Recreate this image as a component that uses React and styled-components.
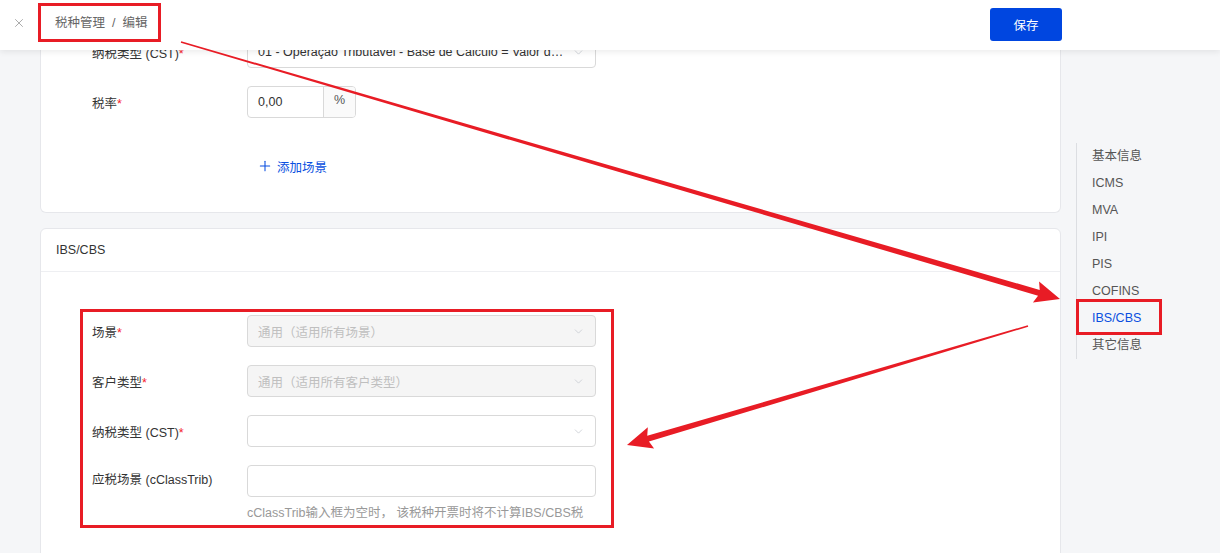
import React from 'react';
import styled, { createGlobalStyle } from 'styled-components';
import { X, Plus, ChevronDown } from 'lucide-react';

const GlobalStyle = createGlobalStyle`
  html, body {
    margin: 0;
    padding: 0;
    background: #f5f6f8;
    font-family: "Liberation Sans", "Noto Sans CJK SC", sans-serif;
    font-size: 12.5px;
    color: #333;
  }
  * { box-sizing: border-box; }
`;

const Page = styled.div`
  position: relative;
  width: 1220px;
  height: 553px;
  overflow: hidden;
  background: #f5f6f8;
`;

const TopBar = styled.div`
  position: absolute;
  top: 0;
  left: 0;
  right: 0;
  height: 50px;
  background: #fff;
  box-shadow: 0 2px 6px rgba(0, 0, 0, 0.08);
  display: flex;
  align-items: center;
  padding: 0 158px 5px 12px;
  z-index: 5;
`;

const CloseBtn = styled.span`
  display: flex;
  align-items: center;
  color: #999;
  width: 14px;
`;

const Crumbs = styled.div`
  margin-left: 29px;
  color: #666;
  display: flex;
  align-items: baseline;
  line-height: 18px;
  gap: 7px;
  flex: 1;
`;

const SaveButton = styled.button`
  width: 72px;
  height: 33px;
  border: none;
  border-radius: 3px;
  background: #0046e0;
  color: #fff;
  font-family: inherit;
  font-size: 12.5px;
  margin-top: 4px;
`;

const Body = styled.div`
  display: flex;
  padding-left: 40px;
`;

const Main = styled.div`
  width: 1021px;
  display: flex;
  flex-direction: column;
  gap: 15px;
`;

const Card = styled.section`
  background: #fff;
  border: 1px solid #e6e7eb;
  border-radius: 6px;
  ${(p) => p.$clipped && 'border-top: none; border-radius: 0 0 6px 6px;'}
`;

const CardHead = styled.div`
  height: 43px;
  padding: 0 15px;
  display: flex;
  align-items: center;
  border-bottom: 1px solid #eeeff2;
  color: #333;
`;

const CardBody = styled.div`
  padding: ${(p) => p.$pad};
  display: flex;
  flex-direction: column;
  gap: 18px;
`;

const Row = styled.div`
  display: flex;
  align-items: ${(p) => (p.$top ? 'flex-start' : 'center')};
`;

const Label = styled.div`
  width: 155px;
  flex-shrink: 0;
  color: #333;
  ${(p) => p.$top && 'line-height: 30px;'}
`;

const Star = styled.span`
  color: #f5222d;
`;

const Field = styled.div`
  display: flex;
  flex-direction: column;
`;

const Select = styled.div`
  width: 349px;
  height: 32px;
  border: 1px solid #d9d9d9;
  border-radius: 4px;
  background: ${(p) => (p.$disabled ? '#f5f5f5' : '#fff')};
  color: ${(p) => (p.$disabled ? '#bfbfbf' : '#333')};
  display: flex;
  align-items: center;
  padding: 0 10px;
  gap: 8px;
`;

const SelectText = styled.span`
  flex: 1;
  white-space: nowrap;
  overflow: hidden;
  text-overflow: ellipsis;
`;

const Chevron = styled.span`
  display: flex;
  color: #c0c4cc;
`;

const TextInput = styled.div`
  width: 349px;
  height: 32px;
  border: 1px solid #d9d9d9;
  border-radius: 4px;
  background: #fff;
`;

const Hint = styled.div`
  margin-top: 7px;
  color: #999;
  line-height: 18px;
`;

const Group = styled.div`
  display: flex;
  height: 32px;
  border: 1px solid #d9d9d9;
  border-radius: 4px;
  overflow: hidden;
`;

const GroupInput = styled.div`
  width: 75px;
  padding: 0 10px;
  display: flex;
  align-items: center;
  color: #333;
`;

const Addon = styled.div`
  width: 32px;
  border-left: 1px solid #d9d9d9;
  background: #fafafa;
  display: flex;
  justify-content: center;
  padding-top: 6px;
  color: #555;
`;

const AddLink = styled.div`
  margin: 14px 0 0 165px;
  height: 32px;
  display: flex;
  align-items: center;
  gap: 4px;
  color: #0a4fe0;
`;

const Side = styled.div`
  margin-left: 15px;
  padding-top: 143px;
`;

const Anchor = styled.ul`
  list-style: none;
  margin: 0;
  padding: 0 0 0 15px;
  border-left: 1px solid #dcdee2;
`;

const AnchorItem = styled.li`
  height: 27px;
  line-height: 27px;
  color: ${(p) => (p.$active ? '#0a4fe0' : '#555')};
`;

const Overlay = styled.svg`
  position: absolute;
  inset: 0;
  z-index: 10;
  pointer-events: none;
`;

const MarkBox = styled.div`
  position: absolute;
  border: 3px solid #e81c25;
  z-index: 10;
  pointer-events: none;
`;

function arrowPoints(x1, y1, x2, y2, w0, w1, headLen, headHalf) {
  const dx = x2 - x1;
  const dy = y2 - y1;
  const len = Math.hypot(dx, dy);
  const ux = dx / len;
  const uy = dy / len;
  const nx = -uy;
  const ny = ux;
  const bx = x2 - ux * headLen;
  const by = y2 - uy * headLen;
  const pts = [
    [x1 + nx * w0, y1 + ny * w0],
    [bx + nx * w1, by + ny * w1],
    [bx + nx * headHalf - ux * 3, by + ny * headHalf - uy * 3],
    [x2, y2],
    [bx - nx * headHalf - ux * 3, by - ny * headHalf - uy * 3],
    [bx - nx * w1, by - ny * w1],
    [x1 - nx * w0, y1 - ny * w0],
  ];
  return pts.map((p) => p.join(',')).join(' ');
}

const anchors = ['基本信息', 'ICMS', 'MVA', 'IPI', 'PIS', 'COFINS', 'IBS/CBS', '其它信息'];

function Req({ children }) {
  return (
    <Label>
      {children}
      <Star>*</Star>
    </Label>
  );
}

export default function App() {
  return (
    <Page>
      <GlobalStyle />
      <TopBar>
        <CloseBtn>
          <X size={14} strokeWidth={1.4} />
        </CloseBtn>
        <Crumbs>
          <span>税种管理</span>
          <span>/</span>
          <span>编辑</span>
        </Crumbs>
        <SaveButton>保存</SaveButton>
      </TopBar>

      <Body>
        <Main>
          <Card $clipped>
            <CardBody $pad="36px 0 30px 51px">
              <Row>
                <Req>纳税类型 (CST)</Req>
                <Select>
                  <SelectText>01 - Operação Tributável - Base de Cálculo = Valor da Operação</SelectText>
                  <Chevron><ChevronDown size={13} strokeWidth={1.3} /></Chevron>
                </Select>
              </Row>
              <Row>
                <Req>税率</Req>
                <Group>
                  <GroupInput>0,00</GroupInput>
                  <Addon>%</Addon>
                </Group>
              </Row>
              <AddLink>
                <Plus size={16} strokeWidth={1.6} />
                <span>添加场景</span>
              </AddLink>
            </CardBody>
          </Card>

          <Card>
            <CardHead>IBS/CBS</CardHead>
            <CardBody $pad="43px 0 40px 51px">
              <Row>
                <Req>场景</Req>
                <Select $disabled>
                  <SelectText>通用（适用所有场景）</SelectText>
                  <Chevron><ChevronDown size={13} strokeWidth={1.3} /></Chevron>
                </Select>
              </Row>
              <Row>
                <Req>客户类型</Req>
                <Select $disabled>
                  <SelectText>通用（适用所有客户类型）</SelectText>
                  <Chevron><ChevronDown size={13} strokeWidth={1.3} /></Chevron>
                </Select>
              </Row>
              <Row>
                <Req>纳税类型 (CST)</Req>
                <Select>
                  <SelectText />
                  <Chevron><ChevronDown size={13} strokeWidth={1.3} /></Chevron>
                </Select>
              </Row>
              <Row $top>
                <Label $top>应税场景 (cClassTrib)</Label>
                <Field>
                  <TextInput />
                  <Hint>cClassTrib输入框为空时， 该税种开票时将不计算IBS/CBS税</Hint>
                </Field>
              </Row>
            </CardBody>
          </Card>
        </Main>

        <Side>
          <Anchor>
            {anchors.map((a) => (
              <AnchorItem key={a} $active={a === 'IBS/CBS'}>{a}</AnchorItem>
            ))}
          </Anchor>
        </Side>
      </Body>

      <MarkBox style={{ left: 38, top: 3, width: 123, height: 39 }} />
      <MarkBox style={{ left: 80, top: 309, width: 534, height: 219 }} />
      <MarkBox style={{ left: 1076, top: 299, width: 86, height: 36 }} />

      <Overlay width="1220" height="553" viewBox="0 0 1220 553">
        <polygon points={arrowPoints(181, 42, 1060, 299, 0.8, 3, 22, 11)} fill="#e81c25" />
        <polygon points={arrowPoints(1028, 326, 627, 445, 0.8, 3, 22, 11)} fill="#e81c25" />
      </Overlay>
    </Page>
  );
}
